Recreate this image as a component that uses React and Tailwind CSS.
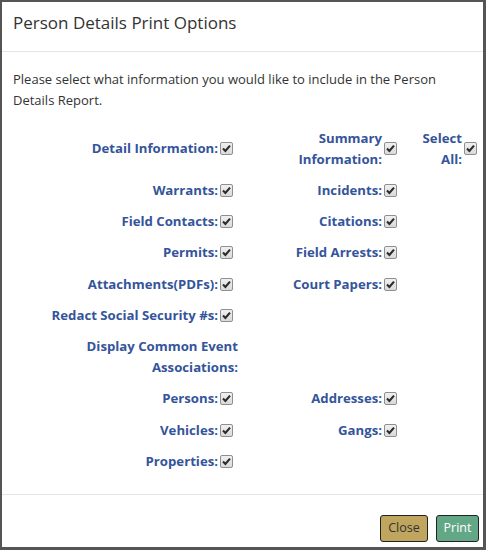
const font = { fontFamily: '"Open Sans", "Noto Sans", Arial, sans-serif' };

function Check() {
  return (
    <span className="inline-flex w-[13px] h-[13px] shrink-0 items-center justify-center rounded-[2px] border border-[#8f8f8f] bg-gradient-to-b from-[#f0f0f0] to-[#dadada]">
      <svg width="11" height="11" viewBox="0 0 11 11">
        <path d="M2 5.6 L4.4 8 L9 2.6" fill="none" stroke="#2b2b2b" strokeWidth="2.1" />
      </svg>
    </span>
  );
}

function Field({ children, className = "" }) {
  return (
    <div className={"flex items-center justify-end gap-[2px] " + className}>
      <span className="text-right">{children}</span>
      <Check />
    </div>
  );
}

export default function App() {
  return (
    <div
      className="w-[486px] h-[550px] flex flex-col bg-white border-t-2 border-l-2 border-r-[3px] border-b-[3px] border-[#555]"
      style={font}
    >
      {/* HEADER */}
      <div className="h-[50px] shrink-0 border-b border-[#e5e5e5] px-[11px] pt-[9px]">
        <h4 className="text-[17px] leading-[24px] text-[#333]">Person Details Print Options</h4>
      </div>

      {/* BODY */}
      <div className="flex-1 px-[11px] pt-[17px]">
        <p className="text-[13px] leading-[21px] text-[#333]">
          Please select what information you would like to include in the Person
          <br />
          Details Report.
        </p>

        <div className="mt-[16.5px] grid grid-cols-[220px_164px_80px] gap-y-[10.25px] text-[13.2px] font-bold leading-[21px] text-[#34549b]">
          <Field>Detail Information:</Field>
          <Field>
            Summary
            <br />
            Information:
          </Field>
          <Field>
            Select
            <br />
            All:
          </Field>

          <Field>Warrants:</Field>
          <Field>Incidents:</Field>
          <div />

          <Field>Field Contacts:</Field>
          <Field>Citations:</Field>
          <div />

          <Field>Permits:</Field>
          <Field>Field Arrests:</Field>
          <div />

          <Field>Attachments(PDFs):</Field>
          <Field>Court Papers:</Field>
          <div />

          <Field>Redact Social Security #s:</Field>
          <div />
          <div />

          <div className="text-right -mr-[5px]">
            Display Common Event
            <br />
            Associations:
          </div>
          <div />
          <div />

          <Field>Persons:</Field>
          <Field>Addresses:</Field>
          <div />

          <Field>Vehicles:</Field>
          <Field>Gangs:</Field>
          <div />

          <Field>Properties:</Field>
          <div />
          <div />
        </div>
      </div>

      {/* FOOTER */}
      <div className="shrink-0 border-t border-[#e5e5e5] pt-[20px] pb-[5px] pr-[4px] flex justify-end gap-[8px]">
        <button className="h-[27px] w-[48px] rounded-[3px] border border-[#222] bg-[#bfa55e] text-[12.5px] text-[#333]">
          Close
        </button>
        <button className="h-[27px] w-[43px] rounded-[3px] border border-[#222] bg-[#63a886] text-[12.5px] text-white">
          Print
        </button>
      </div>
    </div>
  );
}
